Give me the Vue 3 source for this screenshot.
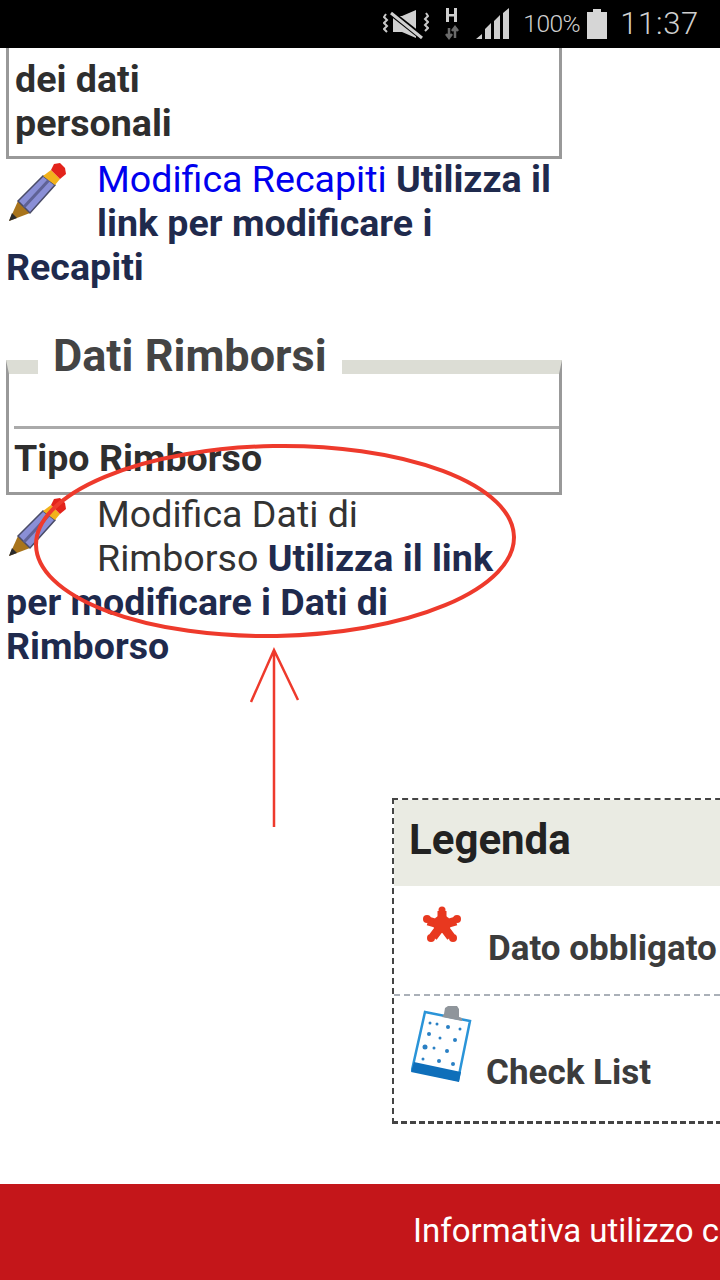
<template>
  <div class="page">
    <header class="status-bar">
      <svg class="ic-mute" width="46" height="30" viewBox="0 0 46 30">
        <path d="M10 7h9L33 1v28L19 23h-9z" fill="#d0d0d0" />
        <path d="M7 3l33 26" stroke="#000" stroke-width="6" />
        <path d="M8 4l31 25" stroke="#d0d0d0" stroke-width="3" />
        <path d="M3 5l-2 3 3 3-3 3 3 3-3 3 3 3M43 4l2 3-3 3 3 3-3 3 3 3-3 3" fill="none" stroke="#c8c8c8" stroke-width="2" />
      </svg>
      <svg class="ic-net" width="14" height="34" viewBox="0 0 14 34">
        <path d="M1 1h3v6h5V1h3v14H9V9.500H4V15H1z" fill="#cfcfcf" />
        <path d="M4 31V21M1 27l3 4 3-4M10 31V20M7 24l3-4 3 4" fill="none" stroke="#6a6a6a" stroke-width="2.500" />
      </svg>
      <svg class="ic-signal" width="33" height="32" viewBox="0 0 33 32">
        <path d="M0 31l6-5v5zM9 31V21l6-6v16zM18 31V13l6-6v24zM27 31V5l6-5v31z" fill="#cfcfcf" />
      </svg>
      <span class="battery-text">100%</span>
      <svg class="ic-battery" width="20" height="30" viewBox="0 0 20 30">
        <path d="M6 0h8v3h6v27H0V3h6z" fill="#d6d6d6" />
      </svg>
      <span class="clock">11:37</span>
    </header>

    <main class="content">
      <div class="box first-box">
        <strong>dei dati<br />personali</strong>
      </div>
      <p class="edit-row">
        <svg class="pencil" width="60" height="60" viewBox="0 0 60 60">
          <path d="M2 59l9-20 12 12z" fill="#a8741c" />
          <path d="M2 59l3-8 5 5z" fill="#2b2b2b" />
          <path d="M11 39L36 14l12 9-25 28z" fill="#8a8fd6" stroke="#4a4c68" stroke-width="1.500" />
          <path d="M17 45l25-27" stroke="#5f6296" stroke-width="3" />
          <path d="M36 14l8-6 9 9-5 6z" fill="#f2b21c" />
          <path d="M44 8l3-6 6-1 5 5 1 6-6 5z" fill="#e3231b" />
        </svg>
        <a class="edit-link">Modifica Recapiti</a>
        <strong> Utilizza il link per modificare i Recapiti</strong>
      </p>

      <fieldset class="box rimborsi">
        <legend>Dati Rimborsi</legend>
        <div class="empty-row"></div>
        <strong class="tipo">Tipo Rimborso</strong>
      </fieldset>
      <p class="edit-row second">
        <svg class="pencil" width="60" height="60" viewBox="0 0 60 60">
          <path d="M2 59l9-20 12 12z" fill="#a8741c" />
          <path d="M2 59l3-8 5 5z" fill="#2b2b2b" />
          <path d="M11 39L36 14l12 9-25 28z" fill="#8a8fd6" stroke="#4a4c68" stroke-width="1.500" />
          <path d="M17 45l25-27" stroke="#5f6296" stroke-width="3" />
          <path d="M36 14l8-6 9 9-5 6z" fill="#f2b21c" />
          <path d="M44 8l3-6 6-1 5 5 1 6-6 5z" fill="#e3231b" />
        </svg>
        <span class="edit-plain">Modifica Dati di<br />Rimborso</span>
        <strong> Utilizza il link per modificare i Dati di Rimborso</strong>
      </p>

      <section class="legend-box">
        <h2>Legenda</h2>
        <div class="legend-row row-required">
          <svg class="ic-star" width="38" height="38" viewBox="0 0 38 38">
            <g stroke="#e8381f" stroke-width="9">
              <path d="M19 19V5M19 19L33 15M19 19L28 31M19 19L10 31M19 19L5 15" />
            </g>
            <g fill="#e8381f">
              <circle cx="19" cy="18" r="9" />
              <circle cx="19" cy="4" r="3.500" />
              <circle cx="34" cy="13" r="4" />
              <circle cx="4" cy="13" r="4" />
              <circle cx="30" cy="32" r="4" />
              <circle cx="8" cy="32" r="4" />
            </g>
          </svg>
          <b>Dato obbligato</b>
        </div>
        <div class="legend-row row-check">
          <svg class="ic-clip" width="62" height="78" viewBox="0 0 62 78">
            <path d="M14 6L59 15 47 74 1 64z" fill="#fff" stroke="#2a94d8" stroke-width="2.500" />
            <path d="M3 56l47 10-2 10L0 66z" fill="#0f6fba" />
            <path d="M33 8l1-6 3-2h9l2 3v8l3 1v3l-20-4z" fill="#8f959b" />
            <g fill="#2a80c4">
              <circle cx="19" cy="17" r="1.500" /><circle cx="26" cy="18" r="1.500" />
              <circle cx="37" cy="21" r="2" /><circle cx="49" cy="23" r="1.500" />
              <circle cx="18" cy="28" r="2" /><circle cx="29" cy="32" r="1.500" />
              <circle cx="44" cy="34" r="2" /><circle cx="14" cy="41" r="2.500" />
              <circle cx="23" cy="42" r="1.500" /><circle cx="36" cy="45" r="2" />
              <circle cx="12" cy="53" r="1.500" /><circle cx="28" cy="55" r="2" />
              <circle cx="42" cy="58" r="2" />
            </g>
          </svg>
          <b>Check List</b>
        </div>
      </section>
    </main>

    <footer class="cookie-bar">Informativa utilizzo cookie</footer>

    <!-- hand drawn annotation on top of the page -->
    <svg class="markup" width="720" height="1280" viewBox="0 0 720 1280">
      <g fill="none" stroke="#ee3a2c">
        <ellipse cx="275" cy="541" rx="239" ry="95" stroke-width="4" transform="rotate(-1 275 541)" />
        <path d="M274 827V650M251 702l23-52 24 50" stroke-width="2.500" />
      </g>
    </svg>
  </div>
</template>

<script setup>
</script>

<style>
body {
  background: #fff;
}
</style>

<style scoped>
.page {
  position: relative;
  width: 720px;
  height: 1280px;
  overflow: hidden;
  display: flex;
  flex-direction: column;
  font-family: Roboto, "Liberation Sans", sans-serif;
  font-size: 37.6px;
  line-height: 44px;
  color: #333;
}

.status-bar {
  flex: none;
  height: 48px;
  background: #000;
  color: #cfcfcf;
  display: flex;
  align-items: center;
  justify-content: flex-end;
  padding-right: 21px;
}

.ic-net {
  margin-left: 16px;
}

.ic-signal {
  margin-left: 17px;
}

.battery-text {
  margin-left: 14px;
  font-size: 24.5px;
  font-weight: 300;
  line-height: 48px;
  letter-spacing: -0.5px;
}

.ic-battery {
  margin-left: 7px;
}

.clock {
  margin-left: 13px;
  font-size: 31px;
  font-weight: 300;
  line-height: 48px;
  letter-spacing: 0.7px;
}

.content {
  flex: 1;
  min-height: 0;
}

.box {
  width: 556px;
  margin: 0 0 0 6px;
  border: solid #999;
  border-width: 0 3px 3px;
  box-sizing: border-box;
  color: #2e2e2e;
}

.first-box {
  padding: 9px 6px 11px;
}

.edit-row {
  width: 548px;
  margin: -2px 0 0 6px;
  color: #333;
}

.edit-row.second {
  margin-top: -3px;
}

.edit-row strong {
  color: #1f2a4d;
}

.pencil {
  float: left;
  margin: 5px 30px 19px 1px;
}

.edit-link {
  color: #0000ee;
}

.rimborsi {
  margin-top: 42px;
  padding: 0 0 0 5px;
  border-top: 14px solid #dcddd5;
  min-width: 0;
}

.rimborsi legend {
  margin: 0 0 0 24px;
  padding: 0 15px 22px;
  font-size: 45px;
  font-weight: 700;
  line-height: 50px;
  color: #444;
}

.empty-row {
  height: 23px;
  border-bottom: 3px solid #aaa;
}

.tipo {
  display: block;
  height: 63px;
  padding-top: 7px;
  box-sizing: border-box;
}

.legend-box {
  box-sizing: border-box;
  width: 420px;
  margin: 130px 0 0 392px;
  border: dashed #444;
  border-width: 2px 2px 3px;
}

.legend-box h2 {
  margin: 0;
  height: 86px;
  padding-left: 15px;
  background: #eaebe3;
  font-size: 42px;
  font-weight: 700;
  line-height: 80px;
  color: #222;
}

.legend-row {
  position: relative;
  display: flex;
  color: #3c3c3c;
}

.legend-row b {
  font-size: 35px;
  white-space: nowrap;
}

.row-required {
  height: 110px;
  border-bottom: 2px dashed #aab0b8;
  box-sizing: border-box;
  padding: 20px 0 0 29px;
}

.ic-star {
  flex: none;
}

.row-required b {
  margin: 21px 0 0 27px;
}

.row-check {
  height: 125px;
  padding: 10px 0 0 17px;
  box-sizing: border-box;
}

.ic-clip {
  flex: none;
}

.row-check b {
  margin: 45px 0 0 13px;
}

.cookie-bar {
  flex: none;
  height: 96px;
  padding-left: 413px;
  background: #c4161a;
  color: #fff;
  font-size: 33px;
  line-height: 94px;
  white-space: nowrap;
}

.markup {
  position: absolute;
  top: 0;
  left: 0;
  pointer-events: none;
}
</style>
